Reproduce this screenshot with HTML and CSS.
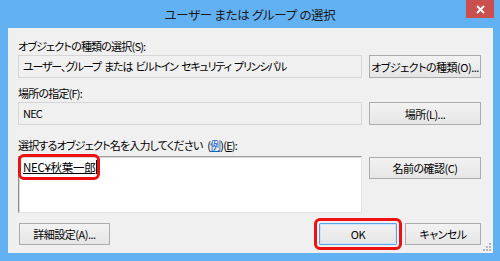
FILE: index.html
```html
<!DOCTYPE html>
<html>
<head>
    <meta charset="utf-8">
    <title>ユーザー または グループ の選択</title>
    <link rel="stylesheet" href="styles.css">
</head>
<body>
    <div class="dialog-window">
        <div class="dialog-titlebar">
            <span class="dialog-title">ユーザー または グループ の選択</span>
            <div class="dialog-close">
                <svg width="9" height="9" viewBox="0 0 9 9"><path d="M1 1 L8 8 M8 1 L1 8" stroke="#fff" stroke-width="1.8"/></svg>
            </div>
        </div>

        <div class="dialog-client">
            <div class="field-label">オブジェクトの種類の選択(S):</div>
            <div class="field-row">
                <div class="readonly-box readonly-box-types">ユーザー、グループ または ビルトイン セキュリティ プリンシパル</div>
                <button class="win-button win-button-tall">オブジェクトの種類(O)...</button>
            </div>

            <div class="field-label field-label-second">場所の指定(F):</div>
            <div class="field-row">
                <div class="readonly-box">NEC</div>
                <button class="win-button win-button-tall">場所(L)...</button>
            </div>

            <div class="field-label field-label-third">選択するオブジェクト名を入力してください (<span class="link-text">例</span>)(<u>E</u>):</div>
            <div class="field-row field-row-names">
                <div class="names-box">
                    <span class="resolved-name">NEC¥秋葉一郎</span><span class="text-caret"></span>
                </div>
                <button class="win-button">名前の確認(C)</button>
            </div>

            <div class="dialog-footer">
                <button class="win-button win-button-advanced">詳細設定(A)...</button>
                <div class="footer-actions">
                    <button class="win-button win-button-default">OK</button>
                    <button class="win-button win-button-cancel">キャンセル</button>
                </div>
            </div>

            <svg class="size-grip" width="8" height="8" viewBox="0 0 8 8">
                <rect x="6" y="0" width="2" height="2" fill="#b8b8b8"/>
                <rect x="3" y="3" width="2" height="2" fill="#b8b8b8"/>
                <rect x="6" y="3" width="2" height="2" fill="#b8b8b8"/>
                <rect x="0" y="6" width="2" height="2" fill="#b8b8b8"/>
                <rect x="3" y="6" width="2" height="2" fill="#b8b8b8"/>
                <rect x="6" y="6" width="2" height="2" fill="#b8b8b8"/>
            </svg>
        </div>
    </div>
</body>
</html>
```

FILE: styles.css
```css
:root {
    --frame-blue: #62b1f3;
    --dialog-background: #f0f0f0;
    --button-border: #acacac;
    --highlight-red: #ee1111;
}

html, body {
    margin: 0;
    padding: 0;
    width: 100%;
    height: 100%;
    overflow: hidden;
    background: var(--frame-blue);
    font-family: "Noto Sans CJK JP", "Noto Sans", sans-serif;
    font-feature-settings: "palt";
    color: #000;
}

* {
    box-sizing: border-box;
}

.dialog-window {
    width: 500px;
    height: 261px;
    display: flex;
    flex-direction: column;
    background: var(--frame-blue);
}

.dialog-titlebar {
    position: relative;
    height: 28px;
    display: flex;
    align-items: center;
    justify-content: center;
    flex-shrink: 0;
}

.dialog-title {
    font-size: 12.5px;
    color: #1b1b1b;
    margin-top: 1px;
    letter-spacing: -0.3px;
}

.dialog-close {
    position: absolute;
    top: 0;
    right: 6px;
    width: 28px;
    height: 18px;
    background: #c9504f;
    display: flex;
    align-items: center;
    justify-content: center;
}

.dialog-close svg {
    display: block;
}

.dialog-client {
    position: relative;
    flex: 1;
    margin: 0 7px 8px 8px;
    padding: 9px 12px 0 10px;
    background: var(--dialog-background);
    font-size: 11px;
    letter-spacing: -0.8px;
    word-spacing: 3px;
}

.field-label {
    height: 18px;
    line-height: 18px;
    white-space: nowrap;
}

.field-label-second {
    margin-top: 6px;
}

.field-label-third {
    margin-top: 11px;
    margin-bottom: 2px;
}

.link-text {
    color: #0a64c8;
    text-decoration: underline;
}

.field-row {
    display: flex;
    gap: 7px;
    align-items: flex-start;
}

.readonly-box {
    width: 344px;
    height: 23px;
    line-height: 21px;
    padding: 0 4px;
    border: 1px solid #d6d6d6;
    background: #f0f0f0;
    white-space: nowrap;
    overflow: hidden;
}

.readonly-box-types {
    letter-spacing: -1.2px;
    word-spacing: 2px;
}

.names-box {
    width: 344px;
    height: 57px;
    padding: 2px 4px;
    background: #fff;
    border: 1px solid #e3e3e3;
    border-top-color: #a0a0a0;
    border-left-color: #8c8c8c;
    box-shadow: inset 1px 1px 0 #d8d8d8;
    display: flex;
    align-items: flex-start;
}

.resolved-name {
    display: inline-block;
    height: 16px;
    line-height: 16px;
    font-size: 11.5px;
    letter-spacing: -0.3px;
    text-decoration: underline;
    text-underline-offset: 1px;
    outline: 3px solid var(--highlight-red);
    outline-offset: 2px;
    border-radius: 1px;
}

.text-caret {
    display: inline-block;
    width: 1px;
    height: 14px;
    margin-top: 1px;
    margin-left: 1px;
    background: #000;
}

.win-button {
    width: 112px;
    height: 22px;
    padding: 0;
    border: 1px solid var(--button-border);
    background: linear-gradient(#f2f2f2, #e6e6e6);
    font-family: inherit;
    font-feature-settings: "palt";
    font-size: 11px;
    letter-spacing: -0.5px;
    color: #000;
    white-space: nowrap;
}

.win-button-tall {
    height: 23px;
}

.field-row-names .win-button {
    margin-top: 1px;
}

.dialog-footer {
    margin-top: 10px;
    display: flex;
    justify-content: space-between;
    align-items: center;
    margin-left: 1px;
}

.win-button-advanced {
    width: 91px;
}

.footer-actions {
    display: flex;
    gap: 8px;
}

.win-button-default {
    width: 78px;
    border-color: #5ea2e6;
    box-shadow: inset 0 0 0 1px #cfe4f8;
    outline: 3px solid var(--highlight-red);
    outline-offset: 2px;
    border-radius: 1px;
}

.win-button-cancel {
    width: 76px;
}

.size-grip {
    position: absolute;
    right: 2px;
    bottom: 2px;
}
```
